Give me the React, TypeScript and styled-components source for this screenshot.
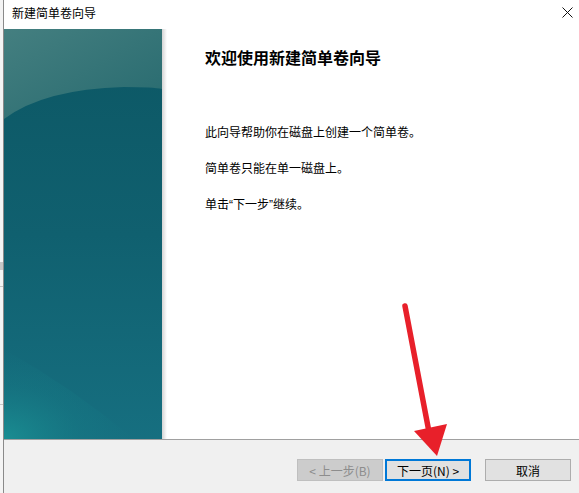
import { FC, ReactNode } from 'react';
import styled, { createGlobalStyle } from 'styled-components';

const GlobalStyle = createGlobalStyle`
  html, body {
    margin: 0;
    padding: 0;
    background: #ffffff;
  }
  body {
    font-family: "Noto Sans CJK SC", "Noto Sans", sans-serif;
  }
`;

const StyledQuote = styled.span`
  font-family: "Liberation Sans", sans-serif;
`;

const getParagraphs = (): { key: string; content: ReactNode }[] => [
  { key: 'p1', content: '此向导帮助你在磁盘上创建一个简单卷。' },
  { key: 'p2', content: '简单卷只能在单一磁盘上。' },
  {
    key: 'p3',
    content: (
      <>
        单击<StyledQuote>“</StyledQuote>下一步<StyledQuote>”</StyledQuote>继续。
      </>
    ),
  },
];

const App: FC = () => {
  const paragraphs = getParagraphs();
  return (
    <>
      <GlobalStyle />
      <StyledPage>
        <StyledBackdrop>
          <StyledBackdropMark top={262} height={8} />
          <StyledBackdropMark top={286} height={1} />
          <StyledBackdropMark top={404} height={1} />
        </StyledBackdrop>
        <StyledWindow>
          {/* 1. title bar */}
          <StyledTitleBar>
            <StyledTitle>新建简单卷向导</StyledTitle>
            <StyledClose aria-label="close">
              <svg width="11" height="11" viewBox="0 0 11 11">
                <path d="M0.5 0.5 L10.5 10.5 M10.5 0.5 L0.5 10.5" stroke="#111" strokeWidth="1" />
              </svg>
            </StyledClose>
          </StyledTitleBar>

          {/* 2. banner + welcome text */}
          <StyledBody>
            <StyledBanner>
              <svg width="158" height="410" viewBox="0 0 158 410">
                <defs>
                  <linearGradient id="top" x1="0" y1="0" x2="1" y2="1">
                    <stop offset="0" stopColor="#447f80" />
                    <stop offset="1" stopColor="#276a6f" />
                  </linearGradient>
                  <linearGradient id="main" x1="0" y1="0" x2="0" y2="1">
                    <stop offset="0" stopColor="#0c5764" />
                    <stop offset="0.5" stopColor="#10606f" />
                    <stop offset="1" stopColor="#166f80" />
                  </linearGradient>
                  <radialGradient id="glow" cx="0" cy="1" r="1">
                    <stop offset="0" stopColor="#1a8f93" stopOpacity="0.95" />
                    <stop offset="0.6" stopColor="#167c86" stopOpacity="0.35" />
                    <stop offset="1" stopColor="#167c86" stopOpacity="0" />
                  </radialGradient>
                </defs>
                <rect width="158" height="410" fill="url(#main)" />
                <path d="M0 0 H158 V60 Q150 58 120 58 Q40 60 0 90 Z" fill="url(#top)" />
                <path d="M0 320 Q70 360 130 410 H0 Z" fill="url(#glow)" />
              </svg>
            </StyledBanner>
            <StyledBannerShadow />
            <StyledContent>
              <StyledHeading>欢迎使用新建简单卷向导</StyledHeading>
              <StyledParagraphs>
                {paragraphs.map(({ key, content }) => (
                  <StyledParagraph key={key}>{content}</StyledParagraph>
                ))}
              </StyledParagraphs>
            </StyledContent>
          </StyledBody>

          {/* 3. buttons */}
          <StyledFooter>
            <StyledButton variant="disabled">&lt; 上一步(B)</StyledButton>
            <StyledButton variant="default">下一页(N) &gt;</StyledButton>
            <StyledButton variant="normal" spaced>
              取消
            </StyledButton>
          </StyledFooter>
        </StyledWindow>

        <StyledArrow width="60" height="170" viewBox="0 0 60 170">
          <path d="M7 6 L31 132" stroke="#e8202a" strokeWidth="5.5" strokeLinecap="round" fill="none" />
          <path d="M16 131 L49 124 L39 156 Z" fill="#e8202a" />
        </StyledArrow>
      </StyledPage>
    </>
  );
};

const StyledPage = styled.div`
  position: relative;
  display: flex;
  width: 579px;
  height: 493px;
  overflow: hidden;
`;

const StyledBackdrop = styled.div`
  position: relative;
  width: 3px;
  flex: none;
  background: #f4f4f4;
`;

const StyledBackdropMark = styled.div<{ top: number; height: number }>`
  position: absolute;
  left: 0;
  right: 0;
  top: ${({ top }) => top}px;
  height: ${({ height }) => height}px;
  background: #c6c6c6;
`;

const StyledWindow = styled.div`
  flex: 1;
  display: flex;
  flex-direction: column;
  border-left: 1px solid #8a8a8a;
  background: #ffffff;
`;

const StyledTitleBar = styled.div`
  height: 29px;
  display: flex;
  align-items: center;
  justify-content: space-between;
  padding: 0 5px 0 8px;
  background: #ffffff;
`;

const StyledTitle = styled.span`
  font-size: 12px;
  color: #000000;
  line-height: 16px;
  margin-top: -3px;
`;

const StyledClose = styled.span`
  display: flex;
  width: 11px;
  height: 11px;
  margin-right: 1px;
  margin-top: -4px;
`;

const StyledBody = styled.div`
  height: 410px;
  display: flex;
  flex-direction: row;
`;

const StyledBanner = styled.div`
  width: 158px;
  flex: none;
  display: flex;
`;

const StyledBannerShadow = styled.div`
  width: 5px;
  flex: none;
  background: linear-gradient(to right, #d4d4d4, #eeeeee 60%, #ffffff);
`;

const StyledContent = styled.div`
  flex: 1;
  display: flex;
  flex-direction: column;
  padding: 17px 0 0 38px;
`;

const StyledHeading = styled.h1`
  margin: 0;
  font-size: 16px;
  font-weight: 700;
  line-height: 22px;
  color: #000000;
`;

const StyledParagraphs = styled.div`
  display: flex;
  flex-direction: column;
  gap: 18px;
  margin-top: 55px;
`;

const StyledParagraph = styled.p`
  margin: 0;
  font-size: 12px;
  line-height: 18px;
  color: #000000;
`;

type ButtonVariant = 'disabled' | 'default' | 'normal';

const StyledFooter = styled.div`
  flex: 1;
  display: flex;
  align-items: flex-start;
  justify-content: flex-end;
  gap: 2px;
  padding: 19px 8px 0 0;
  border-top: 1px solid #a0a0a0;
  background: #f0f0f0;
`;

const StyledButton = styled.div<{ variant: ButtonVariant; spaced?: boolean }>`
  box-sizing: border-box;
  width: 86px;
  height: 22px;
  display: flex;
  align-items: center;
  justify-content: center;
  margin-left: ${({ spaced }) => (spaced ? '12px' : '0')};
  font-size: 12px;
  font-family: "Noto Sans CJK SC", "Liberation Sans", sans-serif;
  color: ${({ variant }) => (variant === 'disabled' ? '#8d8d8d' : '#000000')};
  background: ${({ variant }) => (variant === 'disabled' ? '#cccccc' : '#e1e1e1')};
  border: ${({ variant }) => {
    if (variant === 'default') return '2px solid #0078d7';
    if (variant === 'disabled') return '1px solid #bfbfbf';
    return '1px solid #adadad';
  }};
`;

const StyledArrow = styled.svg`
  position: absolute;
  left: 398px;
  top: 300px;
  pointer-events: none;
`;

export default App;
